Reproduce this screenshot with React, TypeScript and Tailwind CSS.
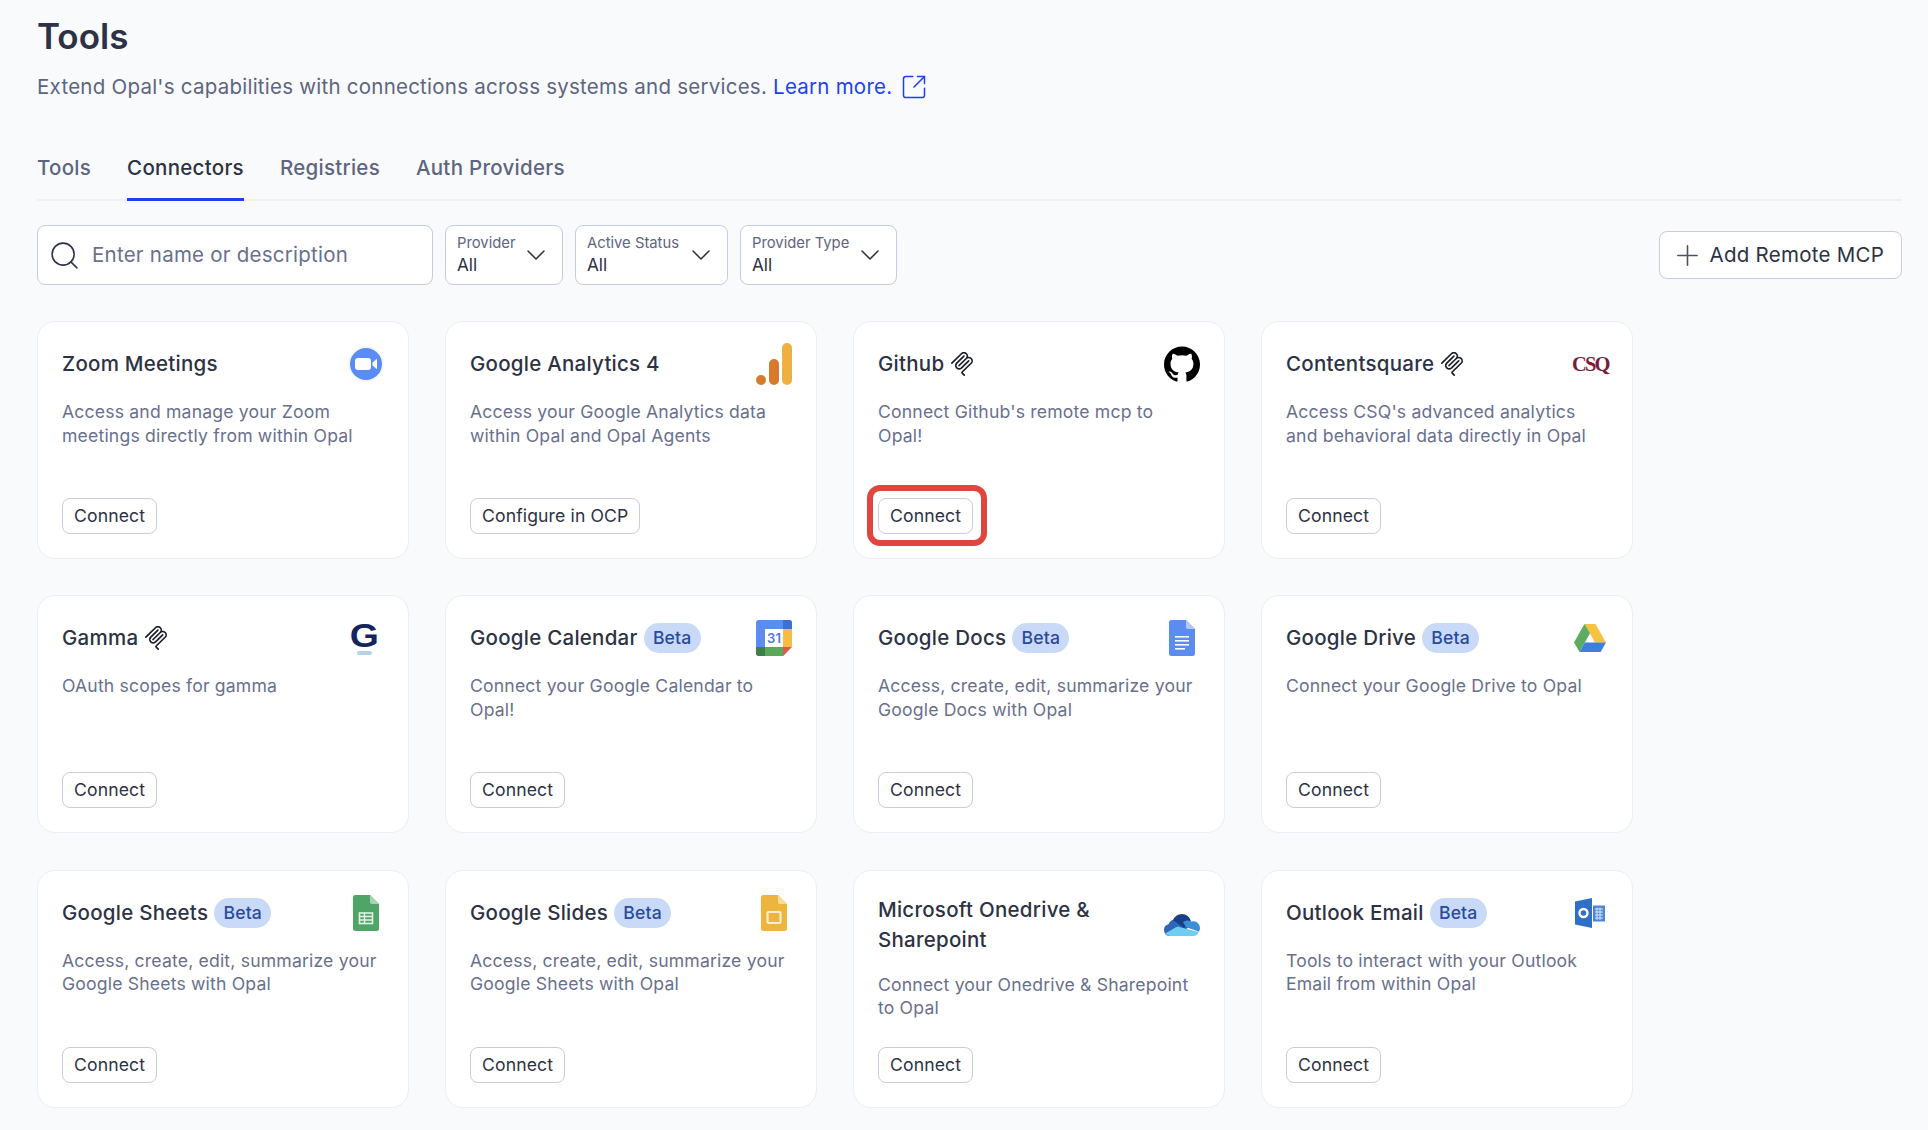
import React from "react";
import { Search, ChevronDown, Plus, SquareArrowOutUpRight } from "lucide-react";
import { SiGithub } from "react-icons/si";

const McpMark = () => (
  <svg viewBox="0 0 24 24" className="w-[24px] h-[24px] shrink-0" fill="#1c1f2b">
    <path d="M15.688 2.343a2.588 2.588 0 00-3.61 0l-9.626 9.44a.863.863 0 01-1.203 0 .823.823 0 010-1.18l9.626-9.44a4.313 4.313 0 016.016 0 4.116 4.116 0 011.204 3.54 4.3 4.3 0 013.609 1.18l.05.05a4.115 4.115 0 010 5.9l-8.706 8.537a.274.274 0 000 .393l1.788 1.754a.823.823 0 010 1.18.863.863 0 01-1.203 0l-1.788-1.753a1.92 1.92 0 010-2.754l8.706-8.538a2.47 2.47 0 000-3.54l-.05-.049a2.588 2.588 0 00-3.607-.003l-7.172 7.034-.002.002-.098.097a.863.863 0 01-1.204 0 .823.823 0 010-1.18l7.273-7.133a2.47 2.47 0 00-.003-3.537z" />
    <path d="M14.485 4.703a.823.823 0 000-1.18.863.863 0 00-1.204 0l-7.119 6.982a4.115 4.115 0 000 5.9 4.314 4.314 0 006.016 0l7.12-6.982a.823.823 0 000-1.18.863.863 0 00-1.204 0l-7.119 6.982a2.588 2.588 0 01-3.61 0 2.47 2.47 0 010-3.54l7.12-6.982z" />
  </svg>
);

const ZoomIcon = () => (
  <svg viewBox="0 0 36 36" className="w-[36px] h-[36px]">
    <circle cx="18" cy="18" r="17" fill="#fff" stroke="#eef0f6" />
    <circle cx="18" cy="18" r="16" fill="#5b8cf5" />
    <rect x="7" y="12" width="16" height="12" rx="3" fill="#fff" />
    <path d="M24.5 16.5 L29 12.8 V23.2 L24.5 19.5 Z" fill="#fff" />
  </svg>
);

const AnalyticsIcon = () => (
  <svg viewBox="0 0 36 42" className="w-[36px] h-[42px]">
    <circle cx="5" cy="37" r="5" fill="#d67b2e" />
    <rect x="13" y="16" width="10" height="26" rx="5" fill="#d67b2e" />
    <rect x="26" y="0" width="10" height="42" rx="5" fill="#f0b040" />
  </svg>
);

const CsqIcon = () => (
  <span className="block w-[36px] pr-[2px] text-center font-['Liberation_Serif',serif] font-bold text-[20.5px] leading-[20px] tracking-[-1.8px] text-[#7b1c3c] whitespace-nowrap">
    CSQ
  </span>
);

const GammaIcon = () => (
  <span className="relative flex flex-col items-center w-[36px] h-[36px] pr-[4px]">
    <span className="font-['Liberation_Sans',sans-serif] font-bold text-[34px] leading-[30px] tracking-normal text-[#14245c] scale-x-110">G</span>
    <span className="w-[15px] h-[4px] rounded-full bg-[#b5d3e8] mt-[1px]" />
  </span>
);

const CalendarIcon = () => (
  <span className="relative block w-[36px] h-[36px]">
    <svg viewBox="0 0 36 36" className="w-[36px] h-[36px]">
      <path d="M3 0H33a3 3 0 013 3V26L27 36H3a3 3 0 01-3-3V3a3 3 0 013-3z" fill="#5b8cf0" />
      <path d="M27 0h6a3 3 0 013 3v6H27z" fill="#3f6fd6" />
      <rect x="27" y="9" width="9" height="18" fill="#f5bd42" />
      <path d="M9 27H27V36H9z" fill="#5aa85c" />
      <path d="M0 27H9V36H3a3 3 0 01-3-3z" fill="#3f8048" />
      <path d="M27 27H36L27 36z" fill="#df5a45" />
      <rect x="9" y="9" width="18" height="18" fill="#fff" />
    </svg>
    <span className="absolute left-[9px] top-[9px] w-[18px] text-center font-['Inter',sans-serif] font-semibold text-[13px] leading-[18px] text-[#4a7be0]">31</span>
  </span>
);

const Sheet = ({ color, fold, children }: { color: string; fold: string; children: React.ReactNode }) => (
  <svg viewBox="0 0 26 36" className="w-[26px] h-[36px]">
    <path d="M2.5 0H17L26 9V33.5a2.5 2.5 0 01-2.5 2.5H2.5A2.5 2.5 0 010 33.5V2.5A2.5 2.5 0 012.5 0z" fill={color} />
    <path d="M17 0L26 9H19a2 2 0 01-2-2z" fill={fold} />
    {children}
  </svg>
);

const DocsIcon = () => (
  <Sheet color="#5b8cf0" fold="#b3caf7">
    <rect x="6" y="16" width="14" height="1.6" fill="#fff" />
    <rect x="6" y="20" width="14" height="1.6" fill="#fff" />
    <rect x="6" y="24" width="14" height="1.6" fill="#fff" />
    <rect x="6" y="28" width="10" height="1.6" fill="#fff" />
  </Sheet>
);

const SheetsIcon = () => (
  <Sheet color="#4fa566" fold="#a6d4b3">
    <rect x="6.5" y="18" width="13" height="10.5" fill="none" stroke="#e4f2e8" strokeWidth="1.6" />
    <path d="M6.5 21.5H19.5M6.5 25H19.5M11.5 18V28.5" stroke="#e4f2e8" strokeWidth="1.4" />
  </Sheet>
);

const SlidesIcon = () => (
  <Sheet color="#edb53f" fold="#f7dc95">
    <rect x="6.5" y="17" width="13" height="11" rx="1" fill="none" stroke="#fbeecb" strokeWidth="2.2" />
  </Sheet>
);

const DriveIcon = () => (
  <svg viewBox="0 0 32 28" className="w-[32px] h-[28px]">
    <path d="M10.5 0H21.5L32 18.5H21z" fill="#f5c242" />
    <path d="M10.5 0L0 18.5L5.5 28L16 9.3z" fill="#5dab61" />
    <path d="M10.8 18.5H32L26.6 28H5.5z" fill="#3f7fdb" />
  </svg>
);

const OneDriveIcon = () => (
  <svg viewBox="0 0 36 22" className="w-[36px] h-[22px]">
    <path d="M6 22a6 6 0 01-1.5-11.8A8.5 8.5 0 0112 5c2 0 3.8.7 5.2 1.8L26 12 14 22z" fill="#2e66b8" />
    <path d="M9 6.5A9.5 9.5 0 0118 0a9.5 9.5 0 019 7.2L20 14l-8-6z" fill="#183f88" />
    <path d="M19 8.2c2.4-2 6.2-2.2 8.2-.8A7 7 0 0136 14c0 1.5-.4 2.6-1 3.7L22 13z" fill="#3c8ed6" />
    <path d="M6 22a6 6 0 01-4.8-2.4L12 13.2a4 4 0 014.2 0L34.6 18A6 6 0 0130 22z" fill="#6fcdef" />
  </svg>
);

const OutlookIcon = () => (
  <svg viewBox="0 0 30 30" className="w-[30px] h-[30px]">
    <path d="M17 0V30L0 26.5V3.5z" fill="#2f6fc8" />
    <circle cx="8.5" cy="15" r="4" fill="none" stroke="#fff" strokeWidth="2.4" />
    <rect x="18" y="7.5" width="12" height="16" fill="#4c86d6" />
    <path d="M20 11h8M20 14h8M20 17h8M20 20h8M22 9.5v12.5M25 9.5v12.5" stroke="#dbe7f7" strokeWidth="1" />
  </svg>
);

type Card = {
  title: string;
  desc: string;
  icon: React.ReactNode;
  mcp?: boolean;
  beta?: boolean;
  action?: string;
  highlighted?: boolean;
};

const cards: Card[] = [
  { title: "Zoom Meetings", desc: "Access and manage your Zoom meetings directly from within Opal", icon: <ZoomIcon /> },
  { title: "Google Analytics 4", desc: "Access your Google Analytics data within Opal and Opal Agents", icon: <AnalyticsIcon />, action: "Configure in OCP" },
  { title: "Github", mcp: true, desc: "Connect Github's remote mcp to Opal!", icon: <SiGithub className="w-[36px] h-[36px] text-black" />, highlighted: true },
  { title: "Contentsquare", mcp: true, desc: "Access CSQ's advanced analytics and behavioral data directly in Opal", icon: <CsqIcon /> },
  { title: "Gamma", mcp: true, desc: "OAuth scopes for gamma", icon: <GammaIcon /> },
  { title: "Google Calendar", beta: true, desc: "Connect your Google Calendar to Opal!", icon: <CalendarIcon /> },
  { title: "Google Docs", beta: true, desc: "Access, create, edit, summarize your Google Docs with Opal", icon: <DocsIcon /> },
  { title: "Google Drive", beta: true, desc: "Connect your Google Drive to Opal", icon: <DriveIcon /> },
  { title: "Google Sheets", beta: true, desc: "Access, create, edit, summarize your Google Sheets with Opal", icon: <SheetsIcon /> },
  { title: "Google Slides", beta: true, desc: "Access, create, edit, summarize your Google Sheets with Opal", icon: <SlidesIcon /> },
  { title: "Microsoft Onedrive & Sharepoint", desc: "Connect your Onedrive & Sharepoint to Opal", icon: <OneDriveIcon /> },
  { title: "Outlook Email", beta: true, desc: "Tools to interact with your Outlook Email from within Opal", icon: <OutlookIcon /> },
];

const ConnectorCard = ({ c }: { c: Card }) => (
  <div className="flex flex-col h-[238px] rounded-[18px] border border-[#eceef6] bg-white px-[24px] pt-[24px] pb-[24px]">
    <div className="flex items-center justify-between min-h-[36px]">
      <div className="flex items-center gap-[6px] text-[20.5px] tracking-[0.25px] leading-[30px] font-medium text-[#2d3244] max-w-[240px]">
        <span>{c.title}</span>
        {c.mcp && <McpMark />}
        {c.beta && (
          <span className="h-[30px] w-[57px] shrink-0 rounded-full bg-[#c9daf8] text-center text-[17.6px] tracking-[0.15px] leading-[30px] font-medium text-[#2a4a9e]">Beta</span>
        )}
      </div>
      <div className="flex w-[36px] h-[36px] shrink-0 items-center justify-center">{c.icon}</div>
    </div>
    <p className="mt-[18px] text-[17.6px] tracking-[0.18px] leading-[23.6px] text-[#69708d]">{c.desc}</p>
    <div className="mt-auto flex">
      <span className="relative flex">
        <button className="h-[36px] rounded-[8px] border border-[#c9cbe0] bg-white px-[11px] text-[17.6px] tracking-[0.12px] leading-[24px] text-[#2d3244]">
          {c.action ?? "Connect"}
        </button>
        {c.highlighted && (
          <span className="absolute -left-[11px] -right-[14px] -top-[13px] -bottom-[12px] rounded-[13px] border-[6px] border-[#e0463e]" />
        )}
      </span>
    </div>
  </div>
);

const Select = ({ label, w }: { label: string; w: string }) => (
  <div className={`${w} flex h-[60px] items-center justify-between rounded-[8px] border border-[#c9cbe0] bg-white pl-[11px] pr-[10px]`}>
    <div className="flex flex-col">
      <span className="text-[14.8px] leading-[19px] text-[#5e6580]">{label}</span>
      <span className="text-[17.2px] leading-[23px] text-[#2d3244]">All</span>
    </div>
    <ChevronDown className="w-[32px] h-[32px] text-[#2d3244]" strokeWidth={1.15} />
  </div>
);

export default function App() {
  return (
    <div className="min-h-[1130px] bg-[#f9fafc] pl-[37px] pr-[26px] pt-[14px] font-['Inter',sans-serif] overflow-hidden">
      <h1 className="text-[35px] leading-[44px] font-semibold text-[#2d3244]">Tools</h1>
      <p className="mt-[17px] flex items-center text-[20.5px] tracking-[0.24px] leading-[24px] text-[#5e6580]">
        <span>Extend Opal's capabilities with connections across systems and services.&nbsp;</span>
        <span className="text-[#1f3ff0]">Learn more.</span>
        <SquareArrowOutUpRight className="ml-[8px] w-[28px] h-[28px] -my-[2px] text-[#1f3ff0]" strokeWidth={1.3} />
      </p>

      <div className="mt-[36px] flex gap-[36px] border-b-2 border-[#eef0f6] text-[20.5px] tracking-[0.27px] font-medium">
        <span className="h-[64px] pt-[21px] leading-[24px] text-[#5e6580]">Tools</span>
        <span className="-mb-[2px] h-[66px] border-b-[3px] border-[#1f3ff0] pt-[21px] leading-[24px] text-[#2d3244]">Connectors</span>
        <span className="h-[64px] pt-[21px] leading-[24px] text-[#5e6580]">Registries</span>
        <span className="h-[64px] pt-[21px] leading-[24px] text-[#5e6580]">Auth Providers</span>
      </div>

      <div className="mt-[24px] flex items-center">
        <div className="flex h-[60px] w-[396px] items-center rounded-[8px] border border-[#c9cbe0] bg-white pl-[10px]">
          <Search className="w-[33px] h-[33px] text-[#2d3244]" strokeWidth={1.1} />
          <span className="ml-[11px] text-[20.5px] tracking-[0.24px] leading-[30px] text-[#69708d]">Enter name or description</span>
        </div>
        <div className="ml-[12px] flex gap-[12px]">
          <Select label="Provider" w="w-[118px]" />
          <Select label="Active Status" w="w-[153px]" />
          <Select label="Provider Type" w="w-[157px]" />
        </div>
        <button className="ml-auto flex h-[48px] w-[243px] items-center justify-end gap-[6px] rounded-[8px] border border-[#c9cbe0] bg-white pr-[17px] text-[20.5px] tracking-[0.25px] text-[#2d3244]">
          <Plus className="w-[33px] h-[33px] text-[#4b5064]" strokeWidth={1.15} />
          Add Remote MCP
        </button>
      </div>

      <div className="mt-[36px] grid grid-cols-[repeat(4,372px)] gap-x-[36px] gap-y-[36.4px]">
        {cards.map((c) => (
          <ConnectorCard key={c.title} c={c} />
        ))}
      </div>
    </div>
  );
}
